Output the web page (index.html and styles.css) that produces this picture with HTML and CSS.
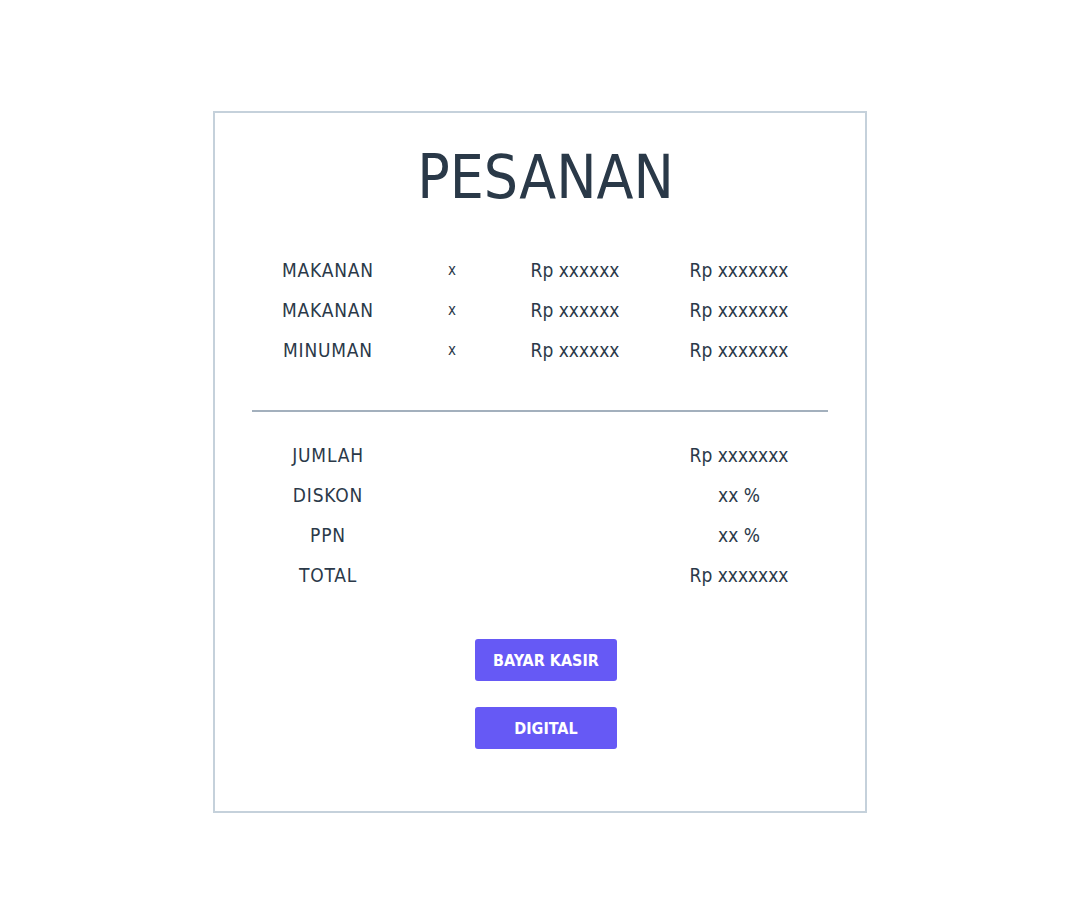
FILE: index.html
```html
<!DOCTYPE html>
<html>
<head>
<meta charset="utf-8">
<link rel="stylesheet" href="styles.css">
</head>
<body>
<div class="card">
  <h1 class="title">PESANAN</h1>
  <div class="table items">
    <div class="cell label">MAKANAN</div><div class="cell small">x</div><div class="cell">Rp xxxxxx</div><div class="cell">Rp xxxxxxx</div>
    <div class="cell label">MAKANAN</div><div class="cell small">x</div><div class="cell">Rp xxxxxx</div><div class="cell">Rp xxxxxxx</div>
    <div class="cell label">MINUMAN</div><div class="cell small">x</div><div class="cell">Rp xxxxxx</div><div class="cell">Rp xxxxxxx</div>
  </div>
  <hr class="divider">
  <div class="table summary">
    <div class="cell label">JUMLAH</div><div class="cell"></div><div class="cell"></div><div class="cell">Rp xxxxxxx</div>
    <div class="cell label">DISKON</div><div class="cell"></div><div class="cell"></div><div class="cell">xx %</div>
    <div class="cell label">PPN</div><div class="cell"></div><div class="cell"></div><div class="cell">xx %</div>
    <div class="cell label">TOTAL</div><div class="cell"></div><div class="cell"></div><div class="cell">Rp xxxxxxx</div>
  </div>
  <div class="actions">
    <button class="btn">BAYAR KASIR</button>
    <button class="btn">DIGITAL</button>
  </div>
</div>
</body>
</html>
```
FILE: styles.css
```css
* { box-sizing: border-box; }
body {
  margin: 0;
  background: #ffffff;
  font-family: "DejaVu Sans Condensed", "DejaVu Sans", sans-serif;
  color: #2b3949;
}
.card {
  width: 654px;
  height: 702px;
  margin: 111px auto 0;
  border: 2px solid #c5d1db;
  padding: 33px 37px 0 37px;
}
.title {
  margin: 0;
  font-weight: 400;
  font-size: 60px;
  line-height: 62px;
  text-align: center;
  padding-left: 11px;
  color: #2a3948;
}
.table {
  display: grid;
  grid-template-columns: 152px 96px 150px 178px;
  grid-auto-rows: 40px;
  font-size: 19px;
}
.items { margin-top: 42px; }
.cell {
  display: flex;
  align-items: center;
  justify-content: center;
}
.label { letter-spacing: 0.8px; }
.small { font-size: 15px; }
.divider {
  margin: 40px 0 23px;
  border: none;
  border-top: 2px solid #a3b0bd;
  height: 0;
}
.actions {
  display: flex;
  flex-direction: column;
  align-items: center;
  gap: 26px;
  margin-top: 44px;
  padding-left: 12px;
}
.btn {
  width: 142px;
  height: 42px;
  border: none;
  border-radius: 3px;
  background: #6659f5;
  color: #ffffff;
  font-family: "DejaVu Sans Condensed", "DejaVu Sans", sans-serif;
  font-weight: 700;
  font-size: 16px;
}
```
